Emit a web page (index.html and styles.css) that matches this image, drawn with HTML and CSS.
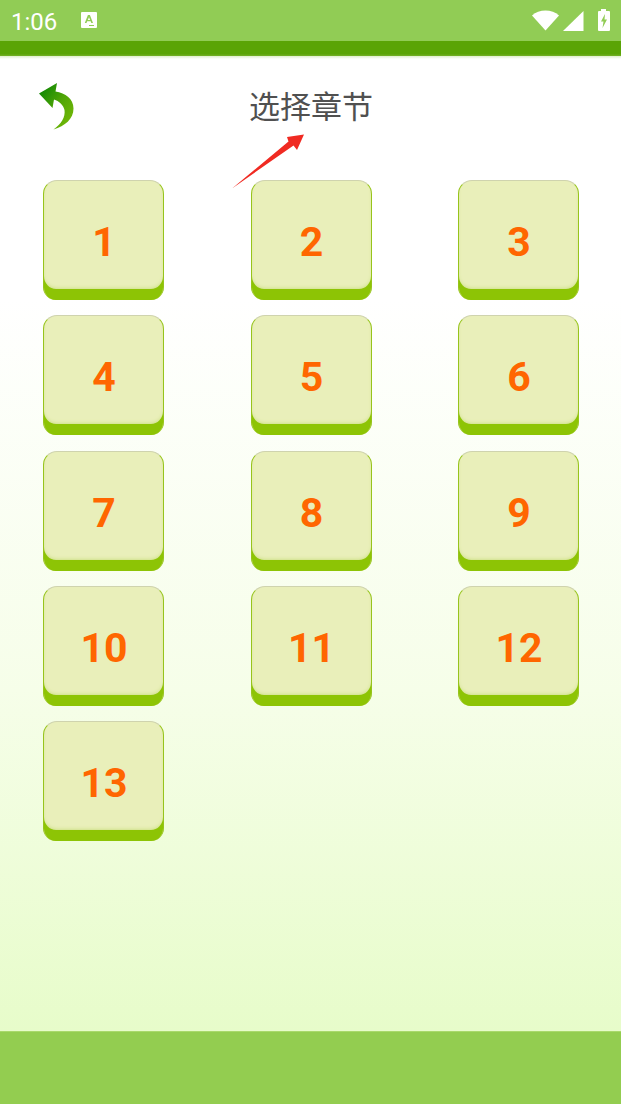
FILE: index.html
```html
<!DOCTYPE html>
<html lang="zh">
<head>
<meta charset="utf-8">
<title>选择章节</title>
<link rel="stylesheet" href="styles.css">
</head>
<body>
<div class="status">
  <div class="status-left">
    <span class="time">1:06</span>
    <svg class="a-icon" width="16" height="18" viewBox="0 0 16 18"><path fill="#fff" fill-rule="evenodd" d="M1 1h14a1 1 0 0 1 1 1v14a1 1 0 0 1-1 1H1a1 1 0 0 1-1-1V2a1 1 0 0 1 1-1zM6.900 4 3.800 12h1.700l.6-1.700h3.600l.6 1.700H12L8.900 4zM8 6.200l1.200 2.800H6.800zM8 14v1h5v-1z"/></svg>
  </div>
  <div class="status-right">
    <svg class="wifi" width="27" height="21" viewBox="0 0 27 21"><path fill="#fff" d="M0 5.500C3.500 2.300 8.500.5 13.500.5s10 1.800 13.500 5L13.500 20.500z"/></svg>
    <svg class="signal" width="21" height="20" viewBox="0 0 21 20"><path fill="#fff" d="M20.500 0v20H0z"/></svg>
    <svg class="battery" width="14" height="23" viewBox="0 0 14 23"><path fill="#fff" fill-rule="evenodd" d="M4 0h5v2h3a1 1 0 0 1 1 1v18a1 1 0 0 1-1 1H2a1 1 0 0 1-1-1V3a1 1 0 0 1 1-1h2zM8 5 4 12.500h2.500L5.500 19 10 10.500H7.500z"/></svg>
  </div>
</div>
<div class="band"></div>
<main class="page">
  <header class="head">
    <svg class="back" width="38" height="50" viewBox="0 0 38 50">
      <defs>
        <linearGradient id="bk" x1="0" y1="0" x2="1" y2="1">
          <stop offset="0" stop-color="#008005"/>
          <stop offset=".5" stop-color="#4fa506"/>
          <stop offset="1" stop-color="#7cbd08"/>
        </linearGradient>
      </defs>
      <path fill="url(#bk)" d="M1 10.500 19 0l-1.500 8.500C27.500 10 35.500 16 35.500 25.500c0 10.500-8.500 17.500-20 21 8-5.500 12-12.500 11-19.500-1-5-5.500-9-10.500-10.500L14.500 25z"/>
    </svg>
    <h1 class="title">选择章节</h1>
  </header>
  <section class="grid">
    <button class="tile">1</button>
    <button class="tile">2</button>
    <button class="tile">3</button>
    <button class="tile">4</button>
    <button class="tile">5</button>
    <button class="tile">6</button>
    <button class="tile">7</button>
    <button class="tile">8</button>
    <button class="tile">9</button>
    <button class="tile">10</button>
    <button class="tile">11</button>
    <button class="tile">12</button>
    <button class="tile">13</button>
  </section>
  <svg class="pointer" width="74" height="56" viewBox="0 0 74 56"><path fill="#f02a22" d="M0 55.500 56.500 8.500 55 4 72 1.500 65 17 61.500 12.500z"/></svg>
</main>
<footer class="foot"></footer>
</body>
</html>
```
FILE: styles.css
```css
* { box-sizing: border-box; }
html, body { margin: 0; padding: 0; }
body {
  width: 621px;
  height: 1104px;
  display: flex;
  flex-direction: column;
  overflow: hidden;
  font-family: Roboto, "Noto Sans CJK SC", sans-serif;
}
.status {
  height: 41px;
  background: #91cc55;
  display: flex;
  align-items: center;
  justify-content: space-between;
  padding: 0 10px 0 11px;
  color: #fff;
}
.status-left { display: flex; align-items: center; gap: 24px; }
.time { font-size: 24px; line-height: 41px; padding-top: 3px; }
.a-icon { display: block; margin-top: -1px; }
.status-right { display: flex; align-items: center; }
.status-right svg { display: block; }
.signal { margin-left: 4px; }
.battery { margin-left: 13px; }
.band {
  height: 15px;
  background: linear-gradient(#5aa406, #5aa406 85%, #74b028);
}
.page {
  position: relative;
  flex: 1;
  padding: 27px 42px 0 43px;
  background:
    linear-gradient(#dfeecb, #ffffff 3px, transparent 3px),
    linear-gradient(#ffffff 0, #ffffff 25%, #f6fee9 65%, #e7fcca 100%);
}
.head {
  display: flex;
  height: 97px;
  align-items: flex-start;
  justify-content: center;
  position: relative;
}
.back { position: absolute; left: -5px; top: 0; }
.title {
  margin: 2px 0 0;
  font-family: "Noto Sans CJK SC", sans-serif;
  font-size: 31px;
  line-height: 40px;
  font-weight: 400;
  color: #505050;
}
.grid {
  display: grid;
  grid-template-columns: repeat(3, 121px);
  justify-content: space-between;
  grid-auto-rows: 120px;
  row-gap: 15.300px;
}
.tile {
  appearance: none;
  border: 0;
  padding: 4px 0 0 1px;
  height: 120px;
  border-radius: 14px 14px 13px 13px;
  background: #e9efba;
  border-top: 1px solid #cfd3ae;
  border-left: 1.500px solid #97c41c;
  border-right: 1.500px solid #97c41c;
  box-shadow: inset 0 -11px 0 #8dc405, inset 0 -13px 4px -2px #c2da70;
  color: #ff6600;
  font-family: Roboto, sans-serif;
  font-size: 41px;
  font-weight: 700;
  line-height: 1;
  text-align: center;
}
.pointer { position: absolute; left: 232px; top: 77px; }
.foot {
  height: 73px;
  background: #93cd50;
  border-top: 1px solid #a9d96b;
}
```
